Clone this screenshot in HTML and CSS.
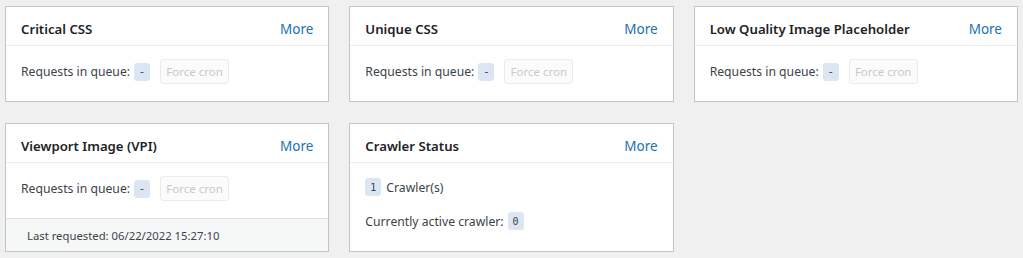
FILE: index.html
```html
<!DOCTYPE html>
<html lang="en">
<head>
<meta charset="utf-8">
<title>Status</title>
<link rel="stylesheet" href="styles.css">
</head>
<body>
<div class="grid">
  <section class="card">
    <header class="card-head"><h2 class="card-title">Critical CSS</h2><a class="more" href="#">More</a></header>
    <div class="card-body queue">
      <span class="label">Requests in queue:</span><span class="badge">-</span><button class="btn" disabled>Force cron</button>
    </div>
  </section>
  <section class="card">
    <header class="card-head"><h2 class="card-title">Unique CSS</h2><a class="more" href="#">More</a></header>
    <div class="card-body queue">
      <span class="label">Requests in queue:</span><span class="badge">-</span><button class="btn" disabled>Force cron</button>
    </div>
  </section>
  <section class="card">
    <header class="card-head"><h2 class="card-title">Low Quality Image Placeholder</h2><a class="more" href="#">More</a></header>
    <div class="card-body queue">
      <span class="label">Requests in queue:</span><span class="badge">-</span><button class="btn" disabled>Force cron</button>
    </div>
  </section>
  <section class="card">
    <header class="card-head"><h2 class="card-title">Viewport Image (VPI)</h2><a class="more" href="#">More</a></header>
    <div class="card-body queue">
      <span class="label">Requests in queue:</span><span class="badge">-</span><button class="btn" disabled>Force cron</button>
    </div>
    <footer class="card-foot">Last requested: 06/22/2022 15:27:10</footer>
  </section>
  <section class="card">
    <header class="card-head"><h2 class="card-title">Crawler Status</h2><a class="more" href="#">More</a></header>
    <div class="card-body stack">
      <p class="row"><code class="badge mono">1</code><span class="after">Crawler(s)</span></p>
      <p class="row"><span class="label">Currently active crawler:</span><code class="badge mono">0</code></p>
    </div>
  </section>
</div>
</body>
</html>
```

FILE: styles.css
```css
* { box-sizing: border-box; }
body {
  margin: 0;
  background: #f0f0f1;
  font-family: "Noto Sans", "Open Sans", sans-serif;
  color: #3c434a;
}
.grid {
  display: grid;
  grid-template-columns: repeat(3, 1fr);
  column-gap: 20px;
  row-gap: 21px;
  padding: 6px 5px;
}
.card {
  background: #fff;
  border: 1px solid #c3c4c7;
  display: flex;
  flex-direction: column;
}
.card-head {
  display: flex;
  align-items: center;
  justify-content: space-between;
  height: 39px;
  padding: 6px 15px 0;
  border-bottom: 1px solid #ececec;
}
.card-title {
  margin: 0;
  font-size: 13.2px;
  font-weight: 600;
  color: #1d2327;
}
.more {
  color: #2271b1;
  text-decoration: none;
  font-size: 13.5px;
}
.card-body {
  flex: 1;
  padding: 13px 15px 17px;
  font-size: 12.2px;
}
.queue {
  display: flex;
  align-items: center;
}
.label { margin-right: 4px; }
.badge {
  display: inline-flex;
  align-items: center;
  justify-content: center;
  min-width: 16px;
  height: 18px;
  padding: 0 4px;
  background: #dce6f3;
  border-radius: 3px;
  color: #50575e;
  font-size: 12px;
}
.mono {
  font-family: "DejaVu Sans Mono", "Liberation Mono", monospace;
  font-size: 10px;
  color: #3c434a;
}
.btn {
  margin-left: 10px;
  width: 69px;
  height: 25px;
  padding: 0;
  border: 1px solid #ebebeb;
  border-radius: 3px;
  background: #fbfbfb;
  color: #c8c9cb;
  font-family: inherit;
  font-size: 11.5px;
}
.stack {
  display: flex;
  flex-direction: column;
  gap: 14px;
  padding-top: 14px;
}
.row {
  margin: 0;
  display: flex;
  align-items: center;
  height: 20px;
}
.after { margin-left: 5px; }
.card-foot {
  border-top: 1px solid #e3e3e3;
  background: #f6f7f7;
  height: 33px;
  padding: 0 21px;
  display: flex;
  align-items: center;
  font-size: 11.3px;
  color: #3c434a;
}
```
